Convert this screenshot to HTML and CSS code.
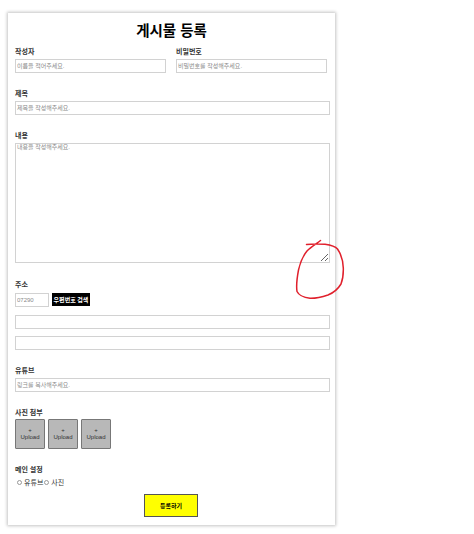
FILE: index.html
```html
<!DOCTYPE html>
<html lang="ko">

<head>
  <meta charset="utf-8">
  <title>게시물 등록</title>
  <link rel="stylesheet" href="styles.css">
</head>

<body>
  <form class="post-form">
    <h1 class="post-title">게시물 등록</h1>

    <div class="field-row">
      <div class="field field-half">
        <label class="field-label">작성자</label>
        <input class="text-input" type="text" placeholder="이름을 적어주세요.">
      </div>
      <div class="field field-half">
        <label class="field-label">비밀번호</label>
        <input class="text-input" type="password" placeholder="비밀번호를 작성해주세요.">
      </div>
    </div>

    <div class="field">
      <label class="field-label">제목</label>
      <input class="text-input" type="text" placeholder="제목을 작성해주세요.">
    </div>

    <div class="field">
      <label class="field-label">내용</label>
      <textarea class="text-input text-area" placeholder="내용을 작성해주세요."></textarea>
    </div>

    <div class="field">
      <label class="field-label label-address">주소</label>
      <div class="zip-row">
        <input class="text-input zip-input" type="text" placeholder="07290">
        <button class="zip-button" type="button">우편번호 검색</button>
      </div>
      <input class="text-input address-input" type="text">
      <input class="text-input address-input-2" type="text">
    </div>

    <div class="field">
      <label class="field-label">유튜브</label>
      <input class="text-input" type="text" placeholder="링크를 복사해주세요.">
    </div>

    <div class="field">
      <label class="field-label">사진 첨부</label>
      <div class="upload-row">
        <button class="upload-box" type="button"><span>+</span><span>Upload</span></button>
        <button class="upload-box" type="button"><span>+</span><span>Upload</span></button>
        <button class="upload-box" type="button"><span>+</span><span>Upload</span></button>
      </div>
    </div>

    <div class="field">
      <label class="field-label">메인 설정</label>
      <div class="radio-row">
        <label class="radio-item"><span class="radio-dot"></span>유튜브</label>
        <label class="radio-item"><span class="radio-dot"></span>사진</label>
      </div>
    </div>

    <button class="submit-button" type="button">등록하기</button>
  </form>

  <!-- red pen mark drawn over the screenshot -->
  <svg class="pen-mark" width="474" height="534" viewBox="0 0 474 534" fill="none">
    <path d="M306.5 244.5C312 243.8 317 243.8 325 244.2C331 245 335 246 337.5 249C341 254 343 260 343.3 268C343.5 275 343 279 341 284C338 289 333 293 328 295C322 297 316 298.5 310 298.3C304 297.5 299 295.5 297 291.5C296 285 297 278 298.5 270C300 263 303 256 307 251C311 247 316 244 320.5 240.5" stroke="#e0202c" stroke-width="1.5" stroke-linecap="round" stroke-linejoin="round"/>
  </svg>
</body>

</html>
```

FILE: styles.css
```css
* {
  box-sizing: border-box;
}

html,
body {
  height: 534px;
  overflow: hidden;
}

body {
  margin: 0;
  background: #fff;
  font-family: "Liberation Sans", "Noto Sans CJK KR", sans-serif;
  color: #000;
}

.post-form {
  width: 327px;
  height: 512px;
  margin: 13px 0 0 8px;
  padding: 8px 5px 0 7px;
  background: #fff;
  box-shadow: 0 0 3px 1px #c4c4c4;
}

.post-title {
  margin: 0 0 5px;
  height: 20px;
  padding-right: 2px;
  font-size: 14.5px;
  line-height: 20px;
  font-weight: bold;
  text-align: center;
}

.field-row {
  display: flex;
  gap: 10px;
}

.field {
  margin-top: 15px;
}

.field-row .field {
  margin-top: 0;
}

.field-half {
  width: 151px;
}

.field-label {
  display: block;
  height: 10px;
  margin-bottom: 3px;
  font-size: 7px;
  line-height: 11px;
  font-weight: bold;
  color: #333;
}

.text-input {
  display: block;
  width: 100%;
  height: 14px;
  padding: 0 1px;
  border: 1px solid #d2d2d2;
  border-radius: 0;
  background: #fff;
  font-family: inherit;
  font-size: 6px;
  outline: none;
}

.text-input::placeholder {
  color: #8a8a8a;
}

.text-area {
  height: 120px;
  padding: 0 1px;
  line-height: 6px;
}

.label-address {
  margin-top: 16px;
  margin-bottom: 4px;
}

.zip-row {
  display: flex;
  gap: 3px;
  align-items: flex-start;
}

.zip-input {
  width: 34px;
}

.zip-button {
  width: 38px;
  height: 13px;
  padding: 0;
  border: 0;
  background: #000;
  color: #fff;
  font-family: inherit;
  font-size: 6px;
  font-weight: bold;
}

.address-input {
  margin-top: 8px;
}

.address-input-2 {
  margin-top: 7px;
}

.upload-row {
  display: flex;
  gap: 3px;
  margin-top: -1px;
}

.upload-box {
  display: flex;
  flex-direction: column;
  align-items: center;
  justify-content: center;
  width: 30px;
  height: 30px;
  padding: 0;
  border: 1px solid #777;
  border-radius: 1px;
  background: #b8b8b8;
  color: #333;
  font-family: inherit;
  font-size: 6px;
  line-height: 7px;
}

.radio-row {
  display: flex;
  gap: 1px;
  padding-left: 2px;
  height: 10px;
  align-items: center;
}

.radio-item {
  display: flex;
  align-items: center;
  gap: 2px;
  font-size: 7px;
  color: #333;
}

.radio-dot {
  width: 5px;
  height: 5px;
  border: 1px solid #999;
  border-radius: 50%;
}

.submit-button {
  display: block;
  width: 54px;
  height: 23px;
  margin: 7px 0 0 129px;
  padding: 0;
  border: 1px solid #555;
  background: #ffff00;
  color: #000;
  font-family: inherit;
  font-size: 6px;
  font-weight: bold;
}

.pen-mark {
  position: absolute;
  left: 0;
  top: 0;
}
```
